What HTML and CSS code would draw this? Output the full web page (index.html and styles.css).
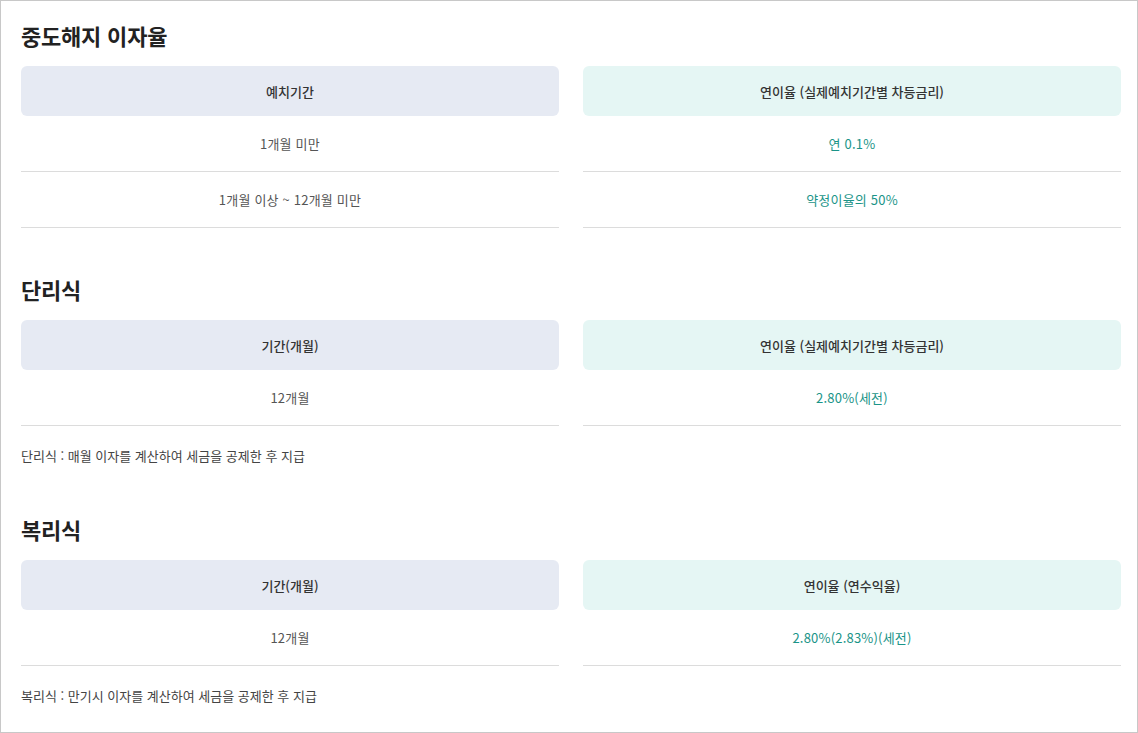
FILE: index.html
```html
<!DOCTYPE html>
<html lang="ko">
<head>
<meta charset="utf-8">
<link rel="stylesheet" href="styles.css">
</head>
<body>
<div class="page">
  <section class="sec">
    <h2 class="title">중도해지 이자율</h2>
    <div class="tbl">
      <div class="row">
        <div class="th th-a">예치기간</div>
        <div class="th th-b">연이율 (실제예치기간별 차등금리)</div>
      </div>
      <div class="row">
        <div class="td">1개월 미만</div>
        <div class="td td-b">연 0.1%</div>
      </div>
      <div class="row">
        <div class="td">1개월 이상 ~ 12개월 미만</div>
        <div class="td td-b">약정이율의 50%</div>
      </div>
    </div>
  </section>

  <section class="sec">
    <h2 class="title">단리식</h2>
    <div class="tbl">
      <div class="row">
        <div class="th th-a">기간(개월)</div>
        <div class="th th-b">연이율 (실제예치기간별 차등금리)</div>
      </div>
      <div class="row">
        <div class="td">12개월</div>
        <div class="td td-b">2.80%(세전)</div>
      </div>
    </div>
    <p class="note">단리식 : 매월 이자를 계산하여 세금을 공제한 후 지급</p>
  </section>

  <section class="sec">
    <h2 class="title">복리식</h2>
    <div class="tbl">
      <div class="row">
        <div class="th th-a">기간(개월)</div>
        <div class="th th-b">연이율 (연수익율)</div>
      </div>
      <div class="row">
        <div class="td">12개월</div>
        <div class="td td-b">2.80%(2.83%)(세전)</div>
      </div>
    </div>
    <p class="note">복리식 : 만기시 이자를 계산하여 세금을 공제한 후 지급</p>
  </section>
</div>
</body>
</html>
```

FILE: styles.css
```css
* { box-sizing: border-box; }
html, body { margin: 0; padding: 0; background: #fff; }
body {
  font-family: "Noto Sans CJK KR", "Noto Sans", sans-serif;
  color: #555;
}
.page {
  width: 1138px;
  height: 733px;
  border: 1px solid #c8c8c8;
  padding: 19px 16px 0 20px;
  display: flex;
  flex-direction: column;
  gap: 46px;
}
.sec { display: flex; flex-direction: column; }
.title {
  margin: 0 0 16px;
  font-size: 22px;
  line-height: 30px;
  font-weight: 700;
  color: #222;
  letter-spacing: -0.2px;
}
.tbl { display: flex; flex-direction: column; }
.row {
  display: grid;
  grid-template-columns: 1fr 1fr;
  column-gap: 24px;
}
.th {
  height: 50px;
  border-radius: 6px;
  display: flex;
  align-items: center;
  justify-content: center;
  font-size: 13px;
  font-weight: 500;
  color: #333;
}
.th-a { background: #e6eaf3; }
.th-b { background: #e5f6f4; }
.td {
  height: 56px;
  border-bottom: 1px solid #dcdcdc;
  display: flex;
  align-items: center;
  justify-content: center;
  font-size: 13px;
  letter-spacing: 0.2px;
  color: #555;
}
.td-b { color: #1a9488; }
.note {
  margin: 20px 0 2px;
  font-size: 13px;
  line-height: 20px;
  color: #444;
}
```
